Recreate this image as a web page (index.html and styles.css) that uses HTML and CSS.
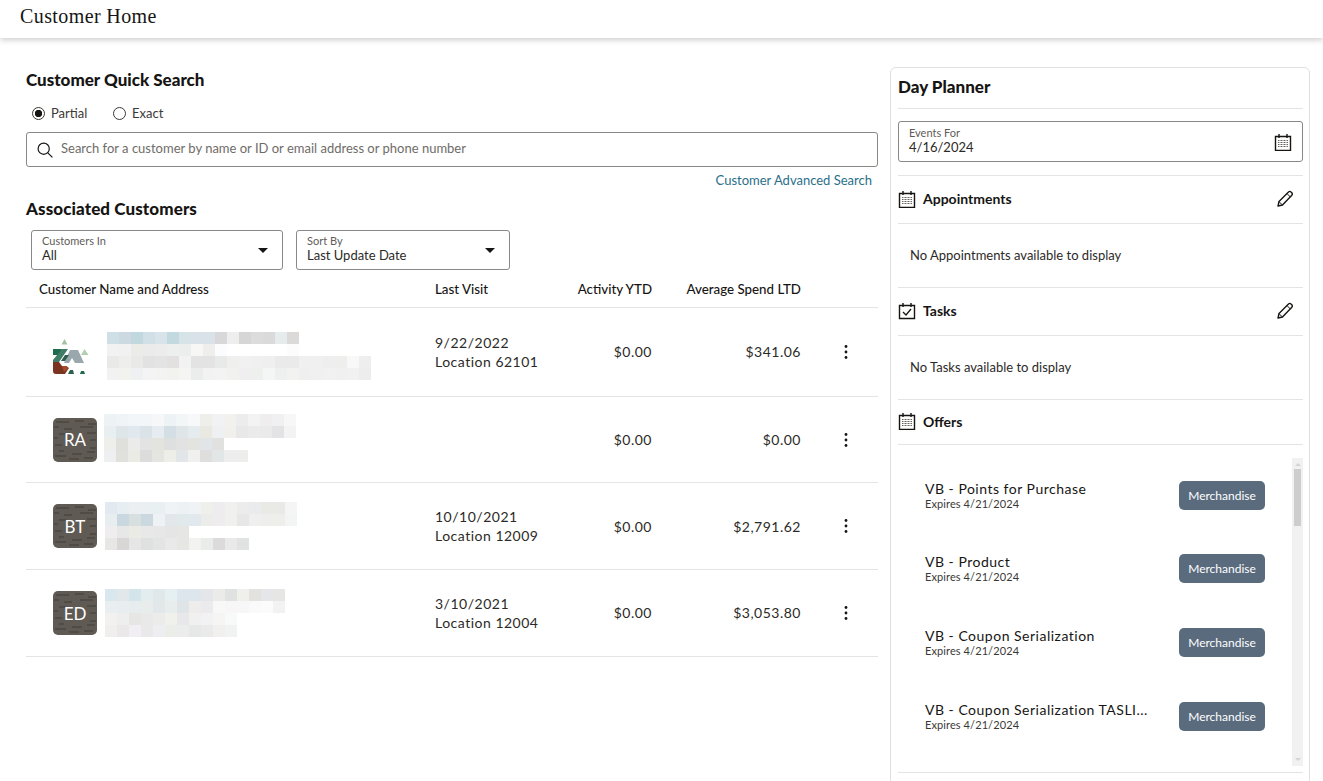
FILE: index.html
```html
<!DOCTYPE html>
<html>
	<head>
		<meta charset="UTF-8">
		<title>Customer Home</title>
		<link rel="stylesheet" href="styles.css">
	</head>
	<body>
		<svg class="sprites" width="0" height="0">
			<symbol id="calendar" viewBox="0 0 18 18">
				<path d="M1.5 3.5h15v14h-15z" fill="none" stroke="currentColor" stroke-width="1.4"/>
				<path d="M5 1v4M13 1v4" stroke="currentColor" stroke-width="1.4"/>
				<path d="M4 7.5h10M4 9.5h10M4 11.5h10M4 13.5h10" stroke="#66625d" stroke-width="1.2" stroke-dasharray="1 .5"/>
			</symbol>
			<symbol id="task" viewBox="0 0 18 18">
				<path d="M1.5 3.5h15v13h-15z" fill="none" stroke="currentColor" stroke-width="1.4"/>
				<path d="M5 1v4M13 1v4" stroke="currentColor" stroke-width="1.4"/>
				<path d="M5 10l3 3 5-6" fill="none" stroke="currentColor" stroke-width="1.3"/>
			</symbol>
			<symbol id="pencil" viewBox="0 0 18 18">
				<path d="M2 16l1-4.500L12.500 2c.8-.8 1.800-.8 2.500 0l.8.8c.7.7.7 1.700 0 2.400L6.500 15z" fill="none" stroke="currentColor" stroke-width="1.4" stroke-linejoin="round"/>
				<path d="M11 3.600l3.600 3.600M3 11.600l3.400 3.400" fill="none" stroke="currentColor" stroke-width="1"/>
			</symbol>
			<symbol id="kebab" viewBox="0 0 6 16">
				<circle cx="3" cy="2.5" r="1.4"/>
				<circle cx="3" cy="8" r="1.4"/>
				<circle cx="3" cy="13.5" r="1.4"/>
			</symbol>
			<symbol id="bark" viewBox="0 0 44 44">
				<path d="M3 4h13M22 3h9M35 6h8M1 9h5M11 11h8M27 9h13M6 16h7M34 15h9M1 20h4M37 22h6M2 27h7M37 30h6M6 33h5M19 36h10M34 34h8M2 38h11M16 41h10M31 40h9" stroke="#3a3631" stroke-width="1" stroke-opacity=".8" fill="none"/>
			</symbol>
		</svg>

		<header class="topbar">
			<h1 class="pageTitle">Customer Home</h1>
		</header>

		<div class="page">
			<main class="leftCol">
				<h2 class="sectionTitle quickTitle">Customer Quick Search</h2>
				<div class="radioRow">
					<span class="radio radioOn"></span><span class="radioLabel">Partial</span>
					<span class="radio"></span><span class="radioLabel">Exact</span>
				</div>
				<div class="searchBox">
					<svg class="searchIcon" viewBox="0 0 16 16" width="16" height="16">
						<circle cx="6.7" cy="6.7" r="5.6" fill="none" stroke="#161513" stroke-width="1.2"/>
						<path d="M10.8 10.8l4.6 4.6" stroke="#161513" stroke-width="1.2"/>
					</svg>
					<span class="placeholder">Search for a customer by name or ID or email address or phone number</span>
				</div>
				<div class="advanced"><a class="advancedLink">Customer Advanced Search</a></div>
				<h2 class="sectionTitle assocTitle">Associated Customers</h2>
				<div class="filters">
					<div class="select selectWide">
						<div class="fieldText">
							<div class="fieldLabel">Customers In</div>
							<div class="fieldValue">All</div>
						</div>
						<span class="caret"></span>
					</div>
					<div class="select selectNarrow">
						<div class="fieldText">
							<div class="fieldLabel">Sort By</div>
							<div class="fieldValue">Last Update Date</div>
						</div>
						<span class="caret"></span>
					</div>
				</div>

				<div class="tableRow tableHead">
					<div class="headName">Customer Name and Address</div>
					<div>Last Visit</div>
					<div class="num">Activity YTD</div>
					<div class="num">Average Spend LTD</div>
					<div></div>
				</div>

				<div class="tableRow custRow rowFirst">
					<div class="custCell custCellLow">
						<svg class="logo" viewBox="0 0 36 35" width="36" height="35">
							<path d="M11.500 0l3 5.500h-6z" fill="#a3c2a0"/>
							<path d="M0 10h9l-3 6H0z" fill="#1f6b50"/>
							<path d="M9 10h6l-9 13H0v-2z" fill="#3f7d66"/>
							<path d="M17 11h8l6 13h-9l-3-5-3 5h-5z" fill="#9aa7ac"/>
							<path d="M28 16l3.500-6 4 6z" fill="#b3cfb0"/>
							<path d="M0 23h6l3 4 4 0 3 2-4 6H3q-3 0-3-3z" fill="#7a3420"/>
							<path d="M9 27h5l1 3-4 3z" fill="#a34d2a"/>
							<path d="M12 16h4l-4 6H8z" fill="#2d5e4e"/>
							<path d="M28 32h3l1 3h-5z" fill="#1f6b4c"/>
							<path d="M17 31h3l1 4h-6z" fill="#2d5e4e"/>
						</svg>
						<svg class="blur" viewBox="0 0 264 48" width="264" height="48">
							<g><rect x="0" y="0" fill="#cfdfe6"/><rect x="12" y="0" fill="#ccd9e0"/><rect x="24" y="0" fill="#c0d8de"/><rect x="36" y="0" fill="#d0e0e6"/><rect x="48" y="0" fill="#d8e4ea"/><rect x="60" y="0" fill="#c2d9e0"/><rect x="72" y="0" fill="#d6e4e8"/><rect x="84" y="0" fill="#d8e2e8"/><rect x="96" y="0" fill="#d8e2e8"/><rect x="108" y="0" fill="#d8d8da"/><rect x="120" y="0" fill="#eeeeee"/><rect x="132" y="0" fill="#d6d6d6"/><rect x="144" y="0" fill="#dcdcdc"/><rect x="156" y="0" fill="#d9dad9"/><rect x="168" y="0" fill="#e6ebeb"/><rect x="180" y="0" fill="#dbdad8"/></g>
							<g><rect x="0" y="12" fill="#f2f2f2"/><rect x="12" y="12" fill="#f1f1f1"/><rect x="24" y="12" fill="#ebebe7"/><rect x="36" y="12" fill="#ebebeb"/><rect x="48" y="12" fill="#ececec"/><rect x="60" y="12" fill="#edefef"/><rect x="72" y="12" fill="#ebeeec"/><rect x="84" y="12" fill="#f7f7f5"/><rect x="96" y="12" fill="#efeeec"/><rect x="108" y="12" fill="#fafcfe"/><rect x="180" y="12" fill="#fcfcfc"/></g>
							<g><rect x="0" y="24" fill="#e9e9e8"/><rect x="12" y="24" fill="#eeeeed"/><rect x="24" y="24" fill="#e9e9e7"/><rect x="36" y="24" fill="#e2e2e2"/><rect x="48" y="24" fill="#e4e4e4"/><rect x="60" y="24" fill="#e2e1e0"/><rect x="72" y="24" fill="#f2f2f2"/><rect x="84" y="24" fill="#e3e3e3"/><rect x="96" y="24" fill="#e3e3e3"/><rect x="108" y="24" fill="#e8eaea"/><rect x="120" y="24" fill="#efefee"/><rect x="132" y="24" fill="#f1f1f1"/><rect x="144" y="24" fill="#f0f0f0"/><rect x="156" y="24" fill="#efefef"/><rect x="168" y="24" fill="#eaeaea"/><rect x="180" y="24" fill="#eaeaea"/><rect x="192" y="24" fill="#f0f0f0"/><rect x="204" y="24" fill="#f0f0f0"/><rect x="216" y="24" fill="#eeeeee"/><rect x="228" y="24" fill="#eeeeed"/><rect x="240" y="24" fill="#f8f8f8"/><rect x="252" y="24" fill="#eeeeee"/></g>
							<g><rect x="0" y="36" fill="#f2f2f2"/><rect x="12" y="36" fill="#f2f2ef"/><rect x="24" y="36" fill="#eff0f2"/><rect x="36" y="36" fill="#f4f4f4"/><rect x="48" y="36" fill="#f3f3f2"/><rect x="60" y="36" fill="#f2f2ee"/><rect x="72" y="36" fill="#f5f5f3"/><rect x="84" y="36" fill="#ebeded"/><rect x="96" y="36" fill="#f2f2f2"/><rect x="108" y="36" fill="#f3f3f3"/><rect x="120" y="36" fill="#f1f1ef"/><rect x="132" y="36" fill="#efefef"/><rect x="144" y="36" fill="#eef0ee"/><rect x="156" y="36" fill="#f4f6f5"/><rect x="168" y="36" fill="#eeefef"/><rect x="180" y="36" fill="#f2f2f0"/><rect x="192" y="36" fill="#efefef"/><rect x="204" y="36" fill="#f0f0f0"/><rect x="216" y="36" fill="#f1f1f1"/><rect x="228" y="36" fill="#f0f0f0"/><rect x="240" y="36" fill="#f1f1f1"/><rect x="252" y="36" fill="#ededed"/></g>
						</svg>
					</div>
					<div class="visit">9/22/2022<br>Location 62101</div>
					<div class="num money moneyHigh">$0.00</div>
					<div class="num money moneyHigh">$341.06</div>
					<div class="menuCell"><svg class="kebab" width="6" height="16"><use href="#kebab"/></svg></div>
				</div>

				<div class="tableRow custRow rowShort">
					<div class="custCell">
						<div class="avatar"><svg class="bark" width="44" height="44"><use href="#bark"/></svg><span class="initials">RA</span></div>
						<svg class="blur blurTight" viewBox="0 0 192 48" width="192" height="48">
							<g><rect x="0" y="0" fill="#edf2f5"/><rect x="12" y="0" fill="#f0f4f6"/><rect x="24" y="0" fill="#f3f6f8"/><rect x="36" y="0" fill="#f2f6f8"/><rect x="48" y="0" fill="#f5f7f8"/><rect x="60" y="0" fill="#edf2f5"/><rect x="72" y="0" fill="#f3f6f7"/><rect x="84" y="0" fill="#f6f8f9"/><rect x="96" y="0" fill="#eeeeeb"/><rect x="108" y="0" fill="#f1f2f4"/><rect x="120" y="0" fill="#f2f1ee"/><rect x="132" y="0" fill="#edecec"/><rect x="144" y="0" fill="#f3f3f4"/><rect x="156" y="0" fill="#efeded"/><rect x="168" y="0" fill="#f0eff1"/><rect x="180" y="0" fill="#f7f7f7"/></g>
							<g><rect x="0" y="12" fill="#e9eef0"/><rect x="12" y="12" fill="#dfe6e9"/><rect x="24" y="12" fill="#e1e9ee"/><rect x="36" y="12" fill="#d9e3e8"/><rect x="48" y="12" fill="#e6ecf1"/><rect x="60" y="12" fill="#d3dfe4"/><rect x="72" y="12" fill="#e0e6e8"/><rect x="84" y="12" fill="#e4ecf0"/><rect x="96" y="12" fill="#e9e9e2"/><rect x="108" y="12" fill="#eef0f2"/><rect x="120" y="12" fill="#f1f0ed"/><rect x="132" y="12" fill="#e8e8e8"/><rect x="144" y="12" fill="#ecebeb"/><rect x="156" y="12" fill="#eaeaea"/><rect x="168" y="12" fill="#e3e3e6"/><rect x="180" y="12" fill="#f3f3f3"/></g>
							<g><rect x="0" y="24" fill="#eeeeeb"/><rect x="12" y="24" fill="#dfdfdc"/><rect x="24" y="24" fill="#ebebea"/><rect x="36" y="24" fill="#e3e3e3"/><rect x="48" y="24" fill="#e4e4df"/><rect x="60" y="24" fill="#dedfdf"/><rect x="72" y="24" fill="#e2e2e2"/><rect x="84" y="24" fill="#e3e3e0"/><rect x="96" y="24" fill="#e1e5e8"/><rect x="108" y="24" fill="#e1e1df"/></g>
							<g><rect x="0" y="36" fill="#eeeff0"/><rect x="12" y="36" fill="#e0e0dd"/><rect x="24" y="36" fill="#eaebe5"/><rect x="36" y="36" fill="#dcdcdd"/><rect x="48" y="36" fill="#e4e5e0"/><rect x="60" y="36" fill="#eeeee8"/><rect x="72" y="36" fill="#e3e6e8"/><rect x="84" y="36" fill="#f0f0ee"/><rect x="96" y="36" fill="#dededc"/><rect x="108" y="36" fill="#e2e6e6"/><rect x="120" y="36" fill="#ededed"/><rect x="132" y="36" fill="#ededec"/></g>
						</svg>
					</div>
					<div class="visit"></div>
					<div class="num money">$0.00</div>
					<div class="num money">$0.00</div>
					<div class="menuCell"><svg class="kebab" width="6" height="16"><use href="#kebab"/></svg></div>
				</div>

				<div class="tableRow custRow">
					<div class="custCell">
						<div class="avatar"><svg class="bark" width="44" height="44"><use href="#bark"/></svg><span class="initials">BT</span></div>
						<svg class="blur" viewBox="0 0 192 48" width="192" height="48">
							<g><rect x="0" y="0" fill="#e2e9f1"/><rect x="12" y="0" fill="#e7eef1"/><rect x="24" y="0" fill="#ebeff2"/><rect x="36" y="0" fill="#eaf0f2"/><rect x="48" y="0" fill="#e9f0f2"/><rect x="60" y="0" fill="#eff3f5"/><rect x="72" y="0" fill="#edf1f3"/><rect x="84" y="0" fill="#f0f3f6"/><rect x="96" y="0" fill="#eff0ec"/><rect x="108" y="0" fill="#eeecee"/><rect x="120" y="0" fill="#f0f0ef"/><rect x="132" y="0" fill="#edecec"/><rect x="144" y="0" fill="#eaebed"/><rect x="156" y="0" fill="#e9e9e6"/><rect x="168" y="0" fill="#e9e9e8"/><rect x="180" y="0" fill="#f5f5f5"/></g>
							<g><rect x="0" y="12" fill="#e8edf0"/><rect x="12" y="12" fill="#c9d8e0"/><rect x="24" y="12" fill="#d7dfdf"/><rect x="36" y="12" fill="#cbd8df"/><rect x="48" y="12" fill="#eef2f4"/><rect x="60" y="12" fill="#e1e7ea"/><rect x="72" y="12" fill="#e2e9ea"/><rect x="84" y="12" fill="#e1e8ee"/><rect x="96" y="12" fill="#ececea"/><rect x="108" y="12" fill="#eeecee"/><rect x="120" y="12" fill="#f0f0ee"/><rect x="132" y="12" fill="#e7e7e7"/><rect x="144" y="12" fill="#efefef"/><rect x="156" y="12" fill="#eeefec"/><rect x="168" y="12" fill="#eeefeb"/><rect x="180" y="12" fill="#f3f4f4"/></g>
							<g><rect x="0" y="24" fill="#efeded"/><rect x="12" y="24" fill="#e7e7e7"/><rect x="24" y="24" fill="#ebebe5"/><rect x="36" y="24" fill="#e8e8e8"/><rect x="48" y="24" fill="#e7e7e7"/><rect x="60" y="24" fill="#e5e5e5"/><rect x="72" y="24" fill="#e6e6e4"/></g>
							<g><rect x="0" y="36" fill="#e7e7e6"/><rect x="12" y="36" fill="#d8d7d6"/><rect x="24" y="36" fill="#e5e6e5"/><rect x="36" y="36" fill="#dfe1e0"/><rect x="48" y="36" fill="#e4e4e6"/><rect x="60" y="36" fill="#e9e9e9"/><rect x="72" y="36" fill="#e6e7e3"/><rect x="84" y="36" fill="#f2f2f0"/><rect x="96" y="36" fill="#eaecec"/><rect x="108" y="36" fill="#dcdadb"/><rect x="120" y="36" fill="#e9e9e9"/><rect x="132" y="36" fill="#e1e3e3"/></g>
						</svg>
					</div>
					<div class="visit">10/10/2021<br>Location 12009</div>
					<div class="num money">$0.00</div>
					<div class="num money">$2,791.62</div>
					<div class="menuCell"><svg class="kebab" width="6" height="16"><use href="#kebab"/></svg></div>
				</div>

				<div class="tableRow custRow">
					<div class="custCell">
						<div class="avatar"><svg class="bark" width="44" height="44"><use href="#bark"/></svg><span class="initials">ED</span></div>
						<svg class="blur" viewBox="0 0 180 48" width="180" height="48">
							<g><rect x="0" y="0" fill="#d9e8ee"/><rect x="12" y="0" fill="#e2e7ea"/><rect x="24" y="0" fill="#d3e4ea"/><rect x="36" y="0" fill="#e3edf0"/><rect x="48" y="0" fill="#e0e8ea"/><rect x="60" y="0" fill="#e6f0f2"/><rect x="72" y="0" fill="#dde6ec"/><rect x="84" y="0" fill="#dde6ec"/><rect x="96" y="0" fill="#e4e6e9"/><rect x="108" y="0" fill="#ebebea"/><rect x="120" y="0" fill="#dfe2e1"/><rect x="132" y="0" fill="#efefec"/><rect x="144" y="0" fill="#e3e2de"/><rect x="156" y="0" fill="#e5e6ea"/><rect x="168" y="0" fill="#e6e6e5"/></g>
							<g><rect x="0" y="12" fill="#e9eff1"/><rect x="12" y="12" fill="#e8edf0"/><rect x="24" y="12" fill="#e7edee"/><rect x="36" y="12" fill="#e8edec"/><rect x="48" y="12" fill="#e2e7ea"/><rect x="60" y="12" fill="#e7ecec"/><rect x="72" y="12" fill="#dfe4e6"/><rect x="84" y="12" fill="#eeedeb"/><rect x="96" y="12" fill="#ebebee"/><rect x="108" y="12" fill="#f8f8f8"/><rect x="120" y="12" fill="#f7f7f8"/><rect x="132" y="12" fill="#f7f7f7"/><rect x="144" y="12" fill="#fafafa"/><rect x="156" y="12" fill="#fbfbfb"/><rect x="168" y="12" fill="#f2f2f3"/></g>
							<g><rect x="0" y="24" fill="#f2f1ef"/><rect x="12" y="24" fill="#eeeeee"/><rect x="24" y="24" fill="#e6e6e4"/><rect x="36" y="24" fill="#e9e9e9"/><rect x="48" y="24" fill="#ececea"/><rect x="60" y="24" fill="#f0f0ec"/><rect x="72" y="24" fill="#e8e8ea"/><rect x="84" y="24" fill="#f0f0f0"/><rect x="96" y="24" fill="#f2f2f5"/><rect x="108" y="24" fill="#f6f5f3"/><rect x="120" y="24" fill="#f8faf9"/></g>
							<g><rect x="0" y="36" fill="#f0efed"/><rect x="12" y="36" fill="#eae8e8"/><rect x="24" y="36" fill="#f1eff3"/><rect x="36" y="36" fill="#e9e9e9"/><rect x="48" y="36" fill="#eeeef2"/><rect x="60" y="36" fill="#ebede9"/><rect x="72" y="36" fill="#ececec"/><rect x="84" y="36" fill="#e6e8e8"/><rect x="96" y="36" fill="#eaeaea"/><rect x="108" y="36" fill="#f1f0ee"/><rect x="120" y="36" fill="#f1f3f3"/></g>
						</svg>
					</div>
					<div class="visit">3/10/2021<br>Location 12004</div>
					<div class="num money moneyHigh">$0.00</div>
					<div class="num money moneyHigh">$3,053.80</div>
					<div class="menuCell"><svg class="kebab" width="6" height="16"><use href="#kebab"/></svg></div>
				</div>
			</main>

			<aside class="planner">
				<h2 class="sectionTitle plannerTitle">Day Planner</h2>
				<div class="dateWrap">
					<div class="dateField">
						<div class="fieldText">
							<div class="fieldLabel">Events For</div>
							<div class="fieldValue">4/16/2024</div>
						</div>
						<svg class="icon" width="18" height="18"><use href="#calendar"/></svg>
					</div>
				</div>

				<div class="plannerHead">
					<svg class="icon" width="18" height="18"><use href="#calendar"/></svg>
					<span class="plannerLabel">Appointments</span>
					<svg class="icon editIcon" width="18" height="18"><use href="#pencil"/></svg>
				</div>
				<div class="emptyMsg">No Appointments available to display</div>

				<div class="plannerHead">
					<svg class="icon" width="18" height="18"><use href="#task"/></svg>
					<span class="plannerLabel">Tasks</span>
					<svg class="icon editIcon" width="18" height="18"><use href="#pencil"/></svg>
				</div>
				<div class="emptyMsg">No Tasks available to display</div>

				<div class="plannerHead offersHead">
					<svg class="icon" width="18" height="18"><use href="#calendar"/></svg>
					<span class="plannerLabel">Offers</span>
				</div>
				<div class="offersWrap">
					<div class="offerList">
						<div class="offers">
							<div class="offer">
								<div class="offerText">
									<div class="offerName">VB - Points for Purchase</div>
									<div class="offerDate">Expires 4/21/2024</div>
								</div>
								<div class="offerBtn">Merchandise</div>
							</div>
							<div class="offer">
								<div class="offerText">
									<div class="offerName">VB - Product</div>
									<div class="offerDate">Expires 4/21/2024</div>
								</div>
								<div class="offerBtn">Merchandise</div>
							</div>
							<div class="offer">
								<div class="offerText">
									<div class="offerName">VB - Coupon Serialization</div>
									<div class="offerDate">Expires 4/21/2024</div>
								</div>
								<div class="offerBtn">Merchandise</div>
							</div>
							<div class="offer">
								<div class="offerText">
									<div class="offerName">VB - Coupon Serialization TASLI...</div>
									<div class="offerDate">Expires 4/21/2024</div>
								</div>
								<div class="offerBtn">Merchandise</div>
							</div>
						</div>
						<div class="scrollTrack">
							<span class="arrowUp"></span>
							<span class="thumb"></span>
							<span class="arrowDown"></span>
						</div>
					</div>
				</div>
			</aside>
		</div>
	</body>
</html>
```

FILE: styles.css
```css
html,
body {
	height: 100%;
	margin: 0;
	overflow: hidden;
}
body {
	background: #fff;
	color: #161513;
	font-family: "Lato", "Noto Sans", sans-serif;
	font-size: 13px;
}
h1,
h2 {
	margin: 0;
}
.sprites {
	display: block;
	height: 0;
}
.topbar {
	height: 38px;
	padding-left: 20px;
	display: flex;
	align-items: center;
	background: #fff;
	box-shadow: 0 2px 6px rgba(0, 0, 0, 0.2);
}
.pageTitle {
	font-family: "Liberation Serif", serif;
	font-size: 20px;
	font-weight: 400;
	letter-spacing: 0.4px;
	position: relative;
	top: -3px;
}
.page {
	display: flex;
	gap: 12px;
	padding: 29px 0 0 26px;
}
.leftCol {
	width: 852px;
	flex: none;
}
.sectionTitle {
	font-size: 17px;
	font-weight: 900;
	line-height: 20px;
}
.quickTitle {
	margin-top: 3px;
}
.radioRow {
	display: flex;
	align-items: center;
	height: 20px;
	margin-top: 13px;
	padding-left: 6px;
	color: #3b3936;
}
.radio {
	width: 13px;
	height: 13px;
	box-sizing: border-box;
	border: 1px solid #3b3936;
	border-radius: 50%;
	flex: none;
}
.radioOn {
	background: radial-gradient(circle, #161513 3.4px, #fff 4px);
}
.radioLabel {
	margin-left: 6px;
	width: 62px;
}
.searchBox {
	height: 35px;
	box-sizing: border-box;
	margin-top: 9px;
	padding-left: 10px;
	border: 1px solid #8a8784;
	border-radius: 3px;
	display: flex;
	align-items: center;
}
.searchIcon {
	flex: none;
}
.placeholder {
	margin-left: 8px;
	margin-bottom: 4px;
	color: #6f6c68;
}
.advanced {
	height: 18px;
	line-height: 18px;
	margin-top: 4px;
	padding-right: 6px;
	text-align: right;
}
.advancedLink {
	color: #2a6f8a;
}
.assocTitle {
	margin-top: 10px;
	letter-spacing: 0.1px;
}
.filters {
	display: flex;
	gap: 13px;
	margin-top: 11px;
	padding-left: 5px;
}
.select {
	height: 40px;
	box-sizing: border-box;
	border: 1px solid #8a8784;
	border-radius: 3px;
	padding: 0 14px 0 10px;
	display: flex;
	align-items: center;
	justify-content: space-between;
}
.selectWide {
	width: 252px;
}
.selectNarrow {
	width: 214px;
}
.caret {
	width: 0;
	height: 0;
	border-left: 5px solid transparent;
	border-right: 5px solid transparent;
	border-top: 5px solid #161513;
}
.fieldText {
	margin-bottom: 4px;
}
.fieldLabel {
	font-size: 11px;
	line-height: 14px;
	color: #5f5c58;
}
.fieldValue {
	line-height: 14px;
	color: #2c2a27;
}
.tableRow {
	display: grid;
	grid-template-columns: 409px 130px 87px 149px 77px;
	align-items: center;
	border-bottom: 1px solid #e4e4e4;
}
.tableHead {
	height: 37px;
	box-sizing: border-box;
	margin-top: 1px;
	font-size: 13.3px;
	font-weight: 500;
}
.headName {
	padding-left: 13px;
}
.num {
	text-align: right;
}
.custRow {
	height: 87px;
	box-sizing: border-box;
}
.rowFirst {
	height: 89px;
}
.rowShort {
	height: 86px;
}
.custCell {
	display: flex;
	align-items: center;
	padding-left: 27px;
}
.custCellLow {
	padding-top: 8px;
}
.logo {
	flex: none;
	margin-right: 18px;
}
.avatar {
	width: 44px;
	height: 44px;
	flex: none;
	margin-right: 8px;
	border-radius: 5px;
	background: #5f5a53;
	display: grid;
	overflow: hidden;
}
.bark,
.initials {
	grid-area: 1 / 1;
}
.initials {
	place-self: center;
	color: #fff;
	font-size: 17px;
}
.blur rect {
	width: 12px;
	height: 12px;
}
.blurTight {
	margin-left: -1px;
	margin-top: -4px;
}
.visit {
	font-size: 14px;
	line-height: 19px;
	letter-spacing: 0.5px;
	color: #2c2a27;
}
.money {
	font-size: 14px;
	letter-spacing: 0.5px;
	color: #2c2a27;
}
.moneyHigh {
	margin-bottom: 2px;
}
.menuCell {
	padding-left: 42px;
	display: flex;
}
.kebab {
	fill: #161513;
}
.planner {
	width: 420px;
	height: 800px;
	box-sizing: border-box;
	flex: none;
	border: 1px solid #e0e0e0;
	border-radius: 6px;
	padding: 0 6px 0 7px;
}
.plannerTitle {
	height: 41px;
	box-sizing: border-box;
	line-height: 38px;
	border-bottom: 1px solid #e4e4e4;
}
.dateWrap {
	height: 67px;
	box-sizing: border-box;
	padding-top: 12px;
	border-bottom: 1px solid #e4e4e4;
}
.dateField {
	height: 41px;
	box-sizing: border-box;
	border: 1px solid #8a8784;
	border-radius: 3px;
	padding: 0 10px;
	display: flex;
	align-items: center;
	justify-content: space-between;
}
.icon {
	flex: none;
	color: #161513;
}
.plannerHead {
	height: 48px;
	box-sizing: border-box;
	padding: 0 9px 2px 0;
	display: flex;
	align-items: center;
	gap: 7px;
	border-bottom: 1px solid #e4e4e4;
}
.offersHead {
	height: 45px;
}
.plannerLabel {
	font-size: 14px;
	font-weight: 700;
	flex: 1;
}
.emptyMsg {
	height: 64px;
	box-sizing: border-box;
	padding-left: 12px;
	line-height: 63px;
	border-bottom: 1px solid #e4e4e4;
	color: #2c2a27;
}
.offersWrap {
	padding: 13px 0 6px;
	border-bottom: 1px solid #e4e4e4;
}
.offerList {
	height: 308px;
	display: flex;
}
.offers {
	flex: 1;
	min-width: 0;
	padding-top: 0.5px;
}
.offer {
	height: 73.6px;
	padding: 0 27px;
	display: flex;
	align-items: center;
	justify-content: space-between;
}
.offerText {
	width: 226px;
}
.offerName {
	font-size: 14px;
	line-height: 18px;
	letter-spacing: 0.5px;
	white-space: nowrap;
}
.offerDate {
	font-size: 11px;
	line-height: 14px;
	margin-top: -1px;
	letter-spacing: 0.1px;
	color: #3b3936;
}
.offerBtn {
	width: 86px;
	height: 29px;
	line-height: 29px;
	border-radius: 5px;
	background: #5a6b7d;
	color: #fff;
	font-size: 12px;
	text-align: center;
}
.scrollTrack {
	width: 11px;
	background: #f1f1f1;
	display: flex;
	flex-direction: column;
	align-items: center;
}
.arrowUp,
.arrowDown {
	width: 0;
	height: 0;
	border-left: 3px solid transparent;
	border-right: 3px solid transparent;
}
.arrowUp {
	margin-top: 5px;
	border-bottom: 3px solid #d4d4d4;
}
.thumb {
	width: 7px;
	height: 57px;
	margin-top: 3px;
	background: #cdcdcd;
}
.arrowDown {
	margin-top: auto;
	margin-bottom: 5px;
	border-top: 3px solid #d4d4d4;
}
```
